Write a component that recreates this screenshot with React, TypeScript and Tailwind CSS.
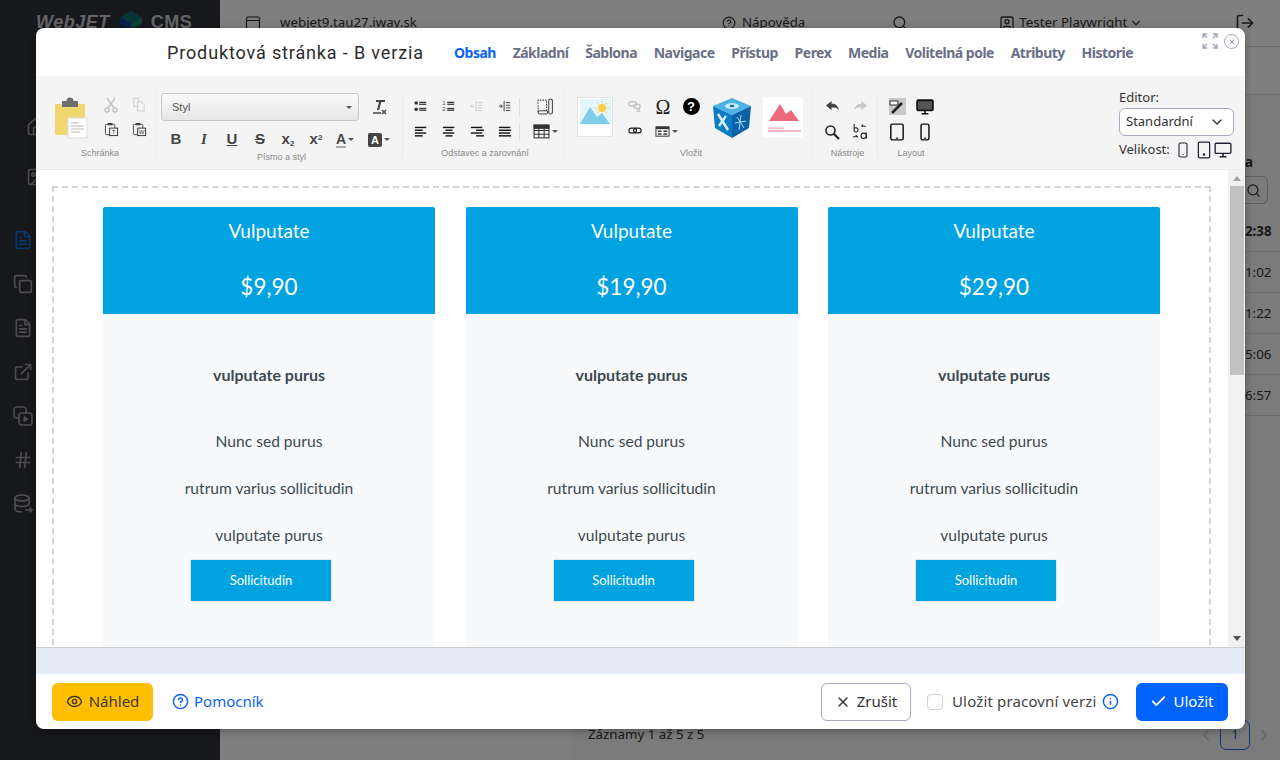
import { Check, ChevronDown, ChevronLeft, ChevronRight, CircleHelp, Copy, ExternalLink, Eye, FileText, Hash, Home, Image, Info, LogOut, Search, SquareUser, X } from "lucide-react";
import type { ReactNode } from "react";

const tabs = ["Obsah", "Základní", "Šablona", "Navigace", "Přístup", "Perex", "Media", "Volitelná pole", "Atributy", "Historie"];
const plans = ["$9,90", "$19,90", "$29,90"];
const times = ["1:02", "1:22", "5:06", "6:57"];

const Ico = ({ children, size = 16, className = "" }: { children: ReactNode; size?: number; className?: string }) => (
    <svg width={size} height={size} viewBox="0 0 16 16" className={className} fill="none">{children}</svg>
);

const Caret = () => <span className="ml-[2px] w-0 h-0 border-x-[3px] border-x-transparent border-t-[3px] border-t-[#555]" />;

const Cell = ({ children, w = "w-[28px]" }: { children: ReactNode; w?: string }) => (
    <div className={`${w} h-[25px] flex items-center justify-center`}>{children}</div>
);

const Lines = ({ kind }: { kind: "left" | "center" | "right" | "full" }) => {
    const short = { left: [1, 9], center: [4, 8], right: [7, 9], full: [1, 14] }[kind];
    return (
        <Ico size={14}>
            <g fill="#111">
                <rect x="1" y="2" width="13" height="1.6" />
                <rect x={short[0]} y="5.2" width={short[1]} height="1.6" />
                <rect x="1" y="8.4" width="13" height="1.6" />
                <rect x={short[0]} y="11.6" width={short[1]} height="1.6" />
            </g>
        </Ico>
    );
};

const PasteSmall = ({ letter }: { letter: string }) => (
    <Ico size={15}>
        <rect x="1.5" y="2.5" width="10" height="11" rx="1" stroke="#444" />
        <rect x="4" y="1" width="5" height="2.5" fill="#444" />
        <rect x="6" y="6.5" width="8.5" height="8" fill="#f4f4f4" stroke="#333" />
        <text x="10.2" y="13" fontSize="6.5" fontFamily="Liberation Sans" textAnchor="middle" fill="#333">{letter}</text>
    </Ico>
);

const FontBtn = ({ children, className = "" }: { children: ReactNode; className?: string }) => (
    <div className={`w-[28px] h-[25px] flex items-center justify-center text-[15px] text-[#444] ${className}`}>{children}</div>
);

const GroupLabel = ({ children }: { children: ReactNode }) => (
    <div className="text-[9px] leading-[10px] text-[#8a8a8a] text-center font-['Liberation_Sans',sans-serif]">{children}</div>
);

const PasteBig = () => (
    <svg width="40" height="42" viewBox="0 0 40 42">
        <rect x="1" y="7" width="30" height="31" rx="1" fill="#f0d76f" />
        <rect x="8" y="4" width="16" height="6" rx="1" fill="#6d6d6d" />
        <circle cx="16" cy="4" r="3.5" fill="#6d6d6d" />
        <rect x="14" y="21" width="19" height="20" fill="#fff" stroke="#ddd" />
        <path d="M17 26h8M17 29h13M17 32h13M17 35h9" stroke="#bbb" strokeWidth="1" />
    </svg>
);

const PhotoIcon = () => (
    <svg width="36" height="40" viewBox="0 0 36 40">
        <rect x="0.5" y="0.5" width="35" height="39" fill="#fff" stroke="#e4e4e4" />
        <rect x="3" y="2" width="31" height="26" fill="#e4f5fb" />
        <path d="M3 27 L13 10 L20 20 L25 16 L33 27 Z" fill="#7fcdea" />
        <circle cx="25" cy="11" r="4" fill="#f7cf45" />
        <path d="M25 4v2M25 16v2M18 11h2M30 11h2M20 6l1.5 1.5M30 6l-1.5 1.5M20 16l1.5-1.5M30 16l-1.5-1.5" stroke="#f7cf45" strokeWidth="1" />
    </svg>
);

const CubeIcon = () => (
    <svg width="40" height="42" viewBox="0 0 40 42">
        <path d="M20 1 L39 9 L20 18 L1 9 Z" fill="#4cb3e6" />
        <path d="M1 9 L20 18 L20 41 L3 31 Z" fill="#0c7cc6" />
        <path d="M39 9 L20 18 L20 41 L37 31 Z" fill="#0a62a8" />
        <ellipse cx="20" cy="9" rx="7" ry="3" fill="#cfeafa" />
        <ellipse cx="20" cy="9" rx="2.5" ry="1.2" fill="#0c7cc6" />
        <path d="M6 17 L16 33 M14 19 L7 29" stroke="#d8f0fb" strokeWidth="2.4" />
        <path d="M29 18 L27 33 M23 26 L34 24 M25 20 L32 31" stroke="#a8dcf5" strokeWidth="1" />
    </svg>
);

const RedImage = () => (
    <svg width="40" height="40" viewBox="0 0 40 40">
        <rect width="40" height="40" fill="#fff" />
        <path d="M6 24 L17 7 L23 17 L28 13 L36 24 Z" fill="#eb6a7c" />
        <rect x="5" y="33" width="33" height="2" fill="#f8b8c2" />
        <rect x="5" y="30.5" width="16" height="1.5" fill="#f8b8c2" />
    </svg>
);

const Tablet = () => (
    <Ico size={18}><rect x="2.5" y="1" width="11" height="14" rx="1.5" stroke="#111" strokeWidth="1.3" /><rect x="7" y="13" width="2" height="1" fill="#111" /></Ico>
);
const Phone = () => (
    <Ico size={18}><rect x="4.5" y="1" width="7" height="14" rx="1.5" stroke="#111" strokeWidth="1.3" /><rect x="7" y="13" width="2" height="1" fill="#111" /></Ico>
);
const Monitor = ({ color = "#111", inner = "none", stroke = 1.2 }: { color?: string; inner?: string; stroke?: number }) => (
    <Ico size={18}><rect x="1" y="2" width="14" height="9" rx="1" stroke={color} strokeWidth={stroke} fill={inner} /><path d="M5 14h6M8 11v3" stroke={color} strokeWidth="1.4" /></Ico>
);

const Toolbar = () => (
    <div className="h-[93px] bg-[#f4f4f4] flex items-start pt-[16px] relative">
        <div className="w-[120px] h-[67px] border-r border-[#ececec] flex flex-col">
            <div className="flex pl-[18px] pt-[5px]">
                <div className="w-[43px]"><PasteBig /></div>
                <div className="grid grid-cols-2 w-[56px] -mt-[5px]">
                    <Cell><Ico><g stroke="#c4c4c4" strokeWidth="1.5"><circle cx="4" cy="13" r="2" /><circle cx="12" cy="13" r="2" /><path d="M5 11 L12 1M11 11 L4 1" /></g></Ico></Cell>
                    <Cell><Ico size={15}><g stroke="#cfcfcf" strokeWidth="1.1"><path d="M2 1h5v9H2z" /><path d="M6 5h4l3 3v7H6z" fill="#f4f4f4" /></g></Ico></Cell>
                    <Cell><PasteSmall letter="T" /></Cell>
                    <Cell><PasteSmall letter="W" /></Cell>
                </div>
            </div>
            <div className="mt-auto pl-[9px] pb-[1px]"><GroupLabel>Schránka</GroupLabel></div>
        </div>

        <div className="w-[247px] h-[67px] border-r border-[#ececec] flex flex-col pl-[5px]">
            <div className="flex items-center h-[28px] mt-[1px]">
                <div className="w-[198px] h-[28px] border border-[#c9c9c9] rounded-[3px] bg-gradient-to-b from-[#fafafa] to-[#e6e6e6] flex items-center pl-[10px] pr-[6px] text-[11px] text-[#555] font-['Liberation_Sans',sans-serif]">
                    <span>Styl</span>
                    <span className="ml-auto flex"><Caret /></span>
                </div>
                <div className="ml-[12px]">
                    <Ico size={16}>
                        <path d="M5 2h9M9.500 2 L7 11" stroke="#444" strokeWidth="2.200" />
                        <path d="M2 14h8" stroke="#444" strokeWidth="1.500" />
                        <path d="M11 11l4 4M15 11l-4 4" stroke="#444" strokeWidth="1.300" />
                    </Ico>
                </div>
            </div>
            <div className="flex items-center mt-[6px] ml-[1px] font-['Liberation_Sans',sans-serif]">
                <FontBtn className="font-bold">B</FontBtn>
                <FontBtn className="italic font-bold font-['Liberation_Serif',serif]">I</FontBtn>
                <FontBtn className="underline font-bold text-[14px]">U</FontBtn>
                <FontBtn className="line-through font-bold">S</FontBtn>
                <FontBtn className="font-bold"><span>x<sub className="text-[8px]">2</sub></span></FontBtn>
                <FontBtn className="font-bold"><span>x<sup className="text-[8px]">2</sup></span></FontBtn>
                <div className="w-[30px] h-[25px] flex items-center justify-center text-[14px] font-bold text-[#444]">
                    <span className="border-b-2 border-[#aaa] leading-[14px]">A</span><Caret />
                </div>
                <div className="w-[38px] h-[25px] flex items-center justify-center">
                    <span className="w-[14px] h-[14px] rounded-[2px] bg-[#444] text-white text-[11px] leading-[14px] font-bold text-center">A</span><Caret />
                </div>
            </div>
            <div className="mt-auto pb-[1px]"><GroupLabel>Písmo a styl</GroupLabel></div>
        </div>

        <div className="w-[161px] h-[67px] border-r border-[#ececec] flex flex-col pl-[4px]">
            <div className="grid grid-cols-[28px_28px_28px_28px_8px_36px] pt-[2px] items-center">
                <Cell><Ico size={14}><g fill="#333"><circle cx="2.5" cy="3.5" r="2" /><circle cx="2.5" cy="10.5" r="2" /><rect x="6" y="2" width="8" height="1.8" /><rect x="6" y="9" width="8" height="1.8" /><rect x="6" y="4.6" width="8" height="1" /><rect x="6" y="11.6" width="8" height="1" /></g></Ico></Cell>
                <Cell><Ico size={14}><g fill="#333"><rect x="6" y="2" width="8" height="1.8" /><rect x="6" y="4.6" width="8" height="1" /><rect x="6" y="9" width="8" height="1.8" /><rect x="6" y="11.6" width="8" height="1" /><text x="0.5" y="6" fontSize="6" fontFamily="Liberation Sans">1</text><text x="0.5" y="13" fontSize="6" fontFamily="Liberation Sans">2</text></g></Ico></Cell>
                <Cell><Ico size={14}><g stroke="#c8c8c8" strokeWidth="1"><path d="M7 1v12M9 3h5M9 6h5M9 9h5M9 12h5M1 7h4M3 5 L1 7 L3 9" /></g></Ico></Cell>
                <Cell><Ico size={14}><g stroke="#333" strokeWidth="1"><path d="M7 1v12M9 3h5M9 6h5M9 9h5M9 12h5M1 7h4M3 5 L5 7 L3 9" /></g></Ico></Cell>
                <div className="w-px h-[18px] bg-[#ddd]" />
                <Cell w="w-[36px]"><Ico size={17}><g stroke="#444" strokeWidth="1"><path d="M1 13V2h8v10" strokeDasharray="1.5 1" /><rect x="1" y="12" width="9" height="3" rx="1.5" /><rect x="11" y="1" width="3.5" height="14" rx="1.7" /></g></Ico></Cell>
                <Cell><Lines kind="left" /></Cell>
                <Cell><Lines kind="center" /></Cell>
                <Cell><Lines kind="right" /></Cell>
                <Cell><Lines kind="full" /></Cell>
                <div className="w-px h-[18px] bg-[#ddd]" />
                <Cell w="w-[36px]">
                    <Ico size={17}><g stroke="#333" strokeWidth="1"><rect x="1" y="2" width="14" height="12" /><path d="M1 7h14M1 10.500h14M5.500 5v9M10.500 5v9" /><rect x="1" y="2" width="14" height="3" fill="#333" /></g></Ico>
                    <Caret />
                </Cell>
            </div>
            <div className="mt-auto pb-[1px]"><GroupLabel>Odstavec a zarovnání</GroupLabel></div>
        </div>

        <div className="w-[249px] h-[67px] border-r border-[#ececec] flex flex-col">
            <div className="flex pl-[13px] pt-[5px]">
                <div className="w-[44px]"><PhotoIcon /></div>
                <div className="grid grid-cols-[28px_28px_28px] -mt-[3px] h-[50px]">
                    <Cell><Ico size={15}><g stroke="#c4c4c4" strokeWidth="1.5"><rect x="1" y="3" width="8" height="4.500" rx="2.200" /><rect x="6" y="5.500" width="7" height="4.500" rx="2.200" /><path d="M9 10l4 4M13 10l-4 4" /></g></Ico></Cell>
                    <Cell><span className="text-[20px] leading-none text-[#222] font-['Liberation_Serif',serif]">Ω</span></Cell>
                    <Cell><span className="w-[17px] h-[17px] rounded-full bg-black text-white text-[13px] leading-[17px] font-bold text-center font-['Liberation_Sans',sans-serif]">?</span></Cell>
                    <Cell><Ico size={15}><g stroke="#222" strokeWidth="1.300"><rect x="1" y="4.500" width="8" height="5" rx="2.500" /><rect x="6" y="4.500" width="8" height="5" rx="2.500" /></g></Ico></Cell>
                    <div className="col-span-2 flex items-center pl-[6px]">
                        <Ico size={15}><g fill="#333"><rect x="1" y="3" width="14" height="10" fill="none" stroke="#333" /><rect x="1" y="3" width="14" height="2.500" /><rect x="3" y="7" width="4" height="1.500" /><rect x="9" y="7" width="4" height="1.500" /><rect x="3" y="10" width="4" height="1.500" /><rect x="9" y="10" width="4" height="1.500" /></g></Ico>
                        <Caret />
                    </div>
                </div>
                <div className="ml-[7px] w-[51px]"><CubeIcon /></div>
                <RedImage />
            </div>
            <div className="mt-auto pb-[1px] pl-[6px]"><GroupLabel>Vložit</GroupLabel></div>
        </div>

        <div className="w-[65px] h-[67px] border-r border-[#ececec] flex flex-col pl-[5px]">
            <div className="grid grid-cols-[28px_28px] pt-[2px]">
                <Cell><Ico size={15}><path d="M1 7 L7 2 V5 C11 5 14 7 15 12 C13 9 11 9 7 9 V12 Z" fill="#444" /></Ico></Cell>
                <Cell><Ico size={15}><path d="M15 7 L9 2 V5 C5 5 2 7 1 12 C3 9 5 9 9 9 V12 Z" fill="#c9c9c9" /></Ico></Cell>
                <Cell><Ico size={16}><g stroke="#222" strokeWidth="1.600"><circle cx="6.500" cy="6.500" r="4.500" /><path d="M10 10 L15 15" strokeWidth="2.200" /></g></Ico></Cell>
                <Cell><Ico size={17}><g stroke="#222" strokeWidth="1"><path d="M2 1v7M2 5.500a2 2 0 1 1 0 2" /><path d="M9 3h4M9 3l1.500-1.500M1 13h4l-1.500-1.500" /><circle cx="11" cy="12" r="2.500" /><path d="M13.500 9v5.500" /></g></Ico></Cell>
            </div>
            <div className="mt-auto pb-[1px]"><GroupLabel>Nástroje</GroupLabel></div>
        </div>

        <div className="w-[69px] h-[67px] flex flex-col pl-[5px]">
            <div className="grid grid-cols-[28px_28px] pt-[2px]">
                <Cell><span className="w-[17px] h-[17px] bg-[#c9c9c9] flex items-center justify-center"><Ico size={16}><rect x="1" y="2" width="8" height="4" fill="#fff" stroke="#333" /><path d="M3 14 L13 4" stroke="#222" strokeWidth="2.500" /></Ico></span></Cell>
                <Cell><Monitor inner="#555" stroke={1.600} /></Cell>
                <Cell><Tablet /></Cell>
                <Cell><Phone /></Cell>
            </div>
            <div className="mt-auto pb-[1px] pr-[8px]"><GroupLabel>Layout</GroupLabel></div>
        </div>

        <div className="ml-auto mr-[11px] w-[115px] -mt-[3px] text-[13px] text-[#333] font-['Noto_Sans',sans-serif]">
            <div className="leading-[16px] h-[16px]">Editor:</div>
            <div className="mt-[3px] h-[28px] rounded-[6px] border border-[#a6abc4] bg-white flex items-center pl-[6px] pr-[8px] text-[#333]">
                <span>Standardní</span>
                <ChevronDown size={16} className="ml-auto" />
            </div>
            <div className="mt-[6px] flex items-center h-[16px]">
                <span>Velikost:</span>
                <span className="ml-[5px] flex items-center gap-[1px]">
                    <Ico size={16}><rect x="4" y="1" width="8" height="14" rx="1.500" stroke="#223" strokeWidth="1.100" /><rect x="7.500" y="12" width="1" height="1" fill="#223" /></Ico>
                    <Ico size={18} className="ml-[3px]"><rect x="3" y="1" width="10" height="14" rx="1" stroke="#223" strokeWidth="1.100" /><rect x="7" y="11" width="2" height="2" fill="#223" /></Ico>
                    <Monitor color="#223" />
                </span>
            </div>
        </div>
    </div>
);

const PlanCard = ({ price }: { price: string }) => (
    <div className="font-['Lato',sans-serif]">
        <div className="h-[107px] bg-[#00a3e0] rounded-t-[2px] text-white text-center">
            <div className="pt-[10px] text-[19px] leading-[27px]">Vulputate</div>
            <div className="mt-[25px] text-[22.500px] leading-[36px]">{price}</div>
        </div>
        <div className="h-[380px] bg-[#f7f9fb] text-[#3c4a50] text-[15.600px]">
            <div className="pt-[37px] text-center text-[16px] font-bold h-[84px] leading-[47px]">vulputate purus</div>
            <div className="pt-[20px]">
                <p className="h-[47px] leading-[47px] text-center">Nunc sed purus</p>
                <p className="h-[47px] leading-[47px] text-center">rutrum varius sollicitudin</p>
                <p className="h-[47px] leading-[47px] text-center">vulputate purus</p>
            </div>
            <div className="mt-[1px] ml-[88px] w-[140px] h-[41px] bg-[#00a3e0] text-white text-[13px] flex items-center justify-center shadow-[0_0_2px_rgba(0,0,0,0.25)]">Sollicitudin</div>
        </div>
    </div>
);

const Modal = () => (
    <div className="absolute left-[36px] top-[28px] w-[1209px] h-[701px] bg-white rounded-[8px] overflow-hidden shadow-[0_2px_8px_rgba(0,0,0,0.3)] flex flex-col">
        <div className="h-[48px] flex items-center relative shrink-0">
            <div className="ml-[131px] w-[287px] text-[18px] tracking-[0.86px] text-[#2b2b2b] font-['Roboto',sans-serif]">Produktová stránka - B verzia</div>
            <div className="flex gap-[16.700px] text-[14px] font-bold text-[#6a6f85] font-['Noto_Sans',sans-serif] tracking-[-0.5px]">
                {tabs.map((t, i) => (
                    <span key={t} className={i === 0 ? "text-[#0a63f6]" : ""}>{t}</span>
                ))}
            </div>
            <svg width="16" height="16" viewBox="0 0 16 16" fill="none" stroke="#9fa5ba" strokeWidth="1.400" className="absolute right-[27px] top-[5px]">
                <path d="M1 5V1h4M1 1l4 4M15 5V1h-4M15 1l-4 4M1 11v4h4M1 15l4-4M15 11v4h-4M15 15l-4-4" />
            </svg>
            <div className="absolute right-[6px] top-[6px] w-[15px] h-[15px] rounded-full border-[1.500px] border-[#9fa5ba] flex items-center justify-center">
                <X size={8} strokeWidth={3} color="#8f95aa" />
            </div>
        </div>

        <Toolbar />

        <div className="h-[479px] shrink-0 border-t border-[#e6ecf4] border-b border-b-[#cfcfcf] flex overflow-hidden">
            <div className="flex-1 bg-white pl-[16px] pr-[17px] pt-[16px] overflow-hidden">
                <div className="h-[600px] border-2 border-dashed border-[#d5d5d5] px-[49px] pt-[19px] grid grid-cols-3 gap-x-[30.500px] content-start">
                    {plans.map(p => <PlanCard key={p} price={p} />)}
                </div>
            </div>
            <div className="w-[17px] bg-[#f1f1f1] flex flex-col items-center pt-[6px] relative">
                <span className="w-0 h-0 border-x-[4px] border-x-transparent border-b-[5px] border-b-[#a3a3a3]" />
                <div className="mt-[5px] w-[14px] h-[189px] bg-[#c1c1c1]" />
                <span className="absolute bottom-[6px] w-0 h-0 border-x-[4px] border-x-transparent border-t-[5px] border-t-[#505050]" />
            </div>
        </div>

        <div className="h-[26px] bg-[#e6ecf7] shrink-0" />

        <div className="flex-1 flex items-center pl-[16px] pr-[17px] text-[15px] font-['Noto_Sans',sans-serif]">
            <div className="w-[101px] h-[38px] rounded-[6px] bg-[#ffbe00] flex items-center justify-center gap-[6px] text-[#40392a]">
                <Eye size={17} />
                <span>Náhled</span>
            </div>
            <div className="ml-[19px] flex items-center gap-[5px] text-[#0a63f6]">
                <CircleHelp size={17} />
                <span>Pomocník</span>
            </div>
            <div className="ml-auto w-[90px] h-[38px] rounded-[6px] border border-[#a6abc4] flex items-center justify-center gap-[6px] text-[#333]">
                <X size={16} />
                <span>Zrušit</span>
            </div>
            <span className="ml-[16px] w-[16px] h-[16px] rounded-[4px] border border-[#d0d0d8] bg-white" />
            <span className="ml-[9px] w-[144px] whitespace-nowrap text-[#444] tracking-[0.15px]">Uložit pracovní verzi</span>
            <Info size={17} className="ml-[6px] text-[#0a63f6]" />
            <div className="ml-[17px] w-[92px] h-[38px] rounded-[6px] bg-[#0063fb] text-white flex items-center justify-center gap-[6px]">
                <Check size={17} strokeWidth={2.500} />
                <span>Uložit</span>
            </div>
        </div>
    </div>
);

const Sidebar = () => (
    <div className="w-[220px] h-[760px] bg-[#2e3039] text-[#a8a9ae] shrink-0 overflow-hidden">
        <div className="flex items-center h-[46px] pl-[36px] pb-[2px]">
            <span className="text-[18px] italic font-bold tracking-[0.5px] font-['Liberation_Sans',sans-serif] text-[#c8c8cc]">WebJET</span>
            <svg width="24" height="24" viewBox="0 0 26 24" className="ml-[9px]">
                <path d="M13 0 L25 7 L13 13 L1 7 Z" fill="#0f6b6b" />
                <path d="M1 7 L13 13 L13 20 L1 14 Z" fill="#0b3f96" />
                <path d="M25 7 L13 13 L13 20 L25 14 Z" fill="#14806a" />
                <path d="M1 14 L13 20 L13 24 L4 24 Z" fill="#0a3484" />
            </svg>
            <span className="ml-[8px] text-[18px] font-bold tracking-[0.5px] font-['Liberation_Sans',sans-serif] text-[#c8c8cc]">CMS</span>
        </div>
        <div className="flex flex-col items-start pl-[13px] text-[#9a9ba0]">
            <div className="pt-[71px] ml-[13px]"><Home size={20} /></div>
            <div className="mt-[30px] ml-[13px]"><Image size={20} /></div>
            <div className="mt-[43px] flex flex-col gap-[24px]">
                <FileText size={20} className="text-[#0f74d8]" />
                <Copy size={20} />
                <FileText size={20} />
                <ExternalLink size={20} />
                <svg width="20" height="20" viewBox="0 0 20 20" fill="none" stroke="currentColor" strokeWidth="1.700">
                    <rect x="1" y="1" width="12" height="11" rx="2.500" />
                    <rect x="6" y="7" width="13" height="12" rx="2.500" fill="#2e3039" />
                    <path d="M11 10.500v5l4-2.500z" fill="currentColor" strokeWidth="1" />
                </svg>
                <Hash size={20} />
                <svg width="20" height="20" viewBox="0 0 20 20" fill="none" stroke="currentColor" strokeWidth="1.700">
                    <ellipse cx="9" cy="4" rx="7" ry="3" />
                    <path d="M2 4v11c0 1.700 3 3 7 3M16 4v6M2 9.500c0 1.700 3 3 7 3s7-1.300 7-3" />
                    <path d="M12 16h7M16.500 13.500L19 16l-2.500 2.500" />
                </svg>
            </div>
        </div>
    </div>
);

const Main = () => (
    <div className="flex-1 h-[760px] flex flex-col text-[#333] font-['Noto_Sans',sans-serif] text-[13.300px] overflow-hidden">
        <div className="h-[47px] border-b border-[#ddd] flex items-center relative pl-[25px] shrink-0 whitespace-nowrap">
            <Ico size={16}><rect x="1.500" y="2" width="13" height="12" rx="1.500" stroke="#223" strokeWidth="1.200" /><path d="M1.500 5.500h13" stroke="#223" /></Ico>
            <span className="ml-[19px]">webjet9.tau27.iway.sk</span>
            <CircleHelp size={14} className="ml-[305px]" />
            <span className="ml-[6px]">Nápověda</span>
            <Search size={16} className="ml-[87px]" />
            <SquareUser size={16} className="ml-[91px]" />
            <span className="ml-[4px]">Tester Playwright</span>
            <ChevronDown size={14} className="ml-[2px]" />
            <LogOut size={20} className="ml-[92px]" />
        </div>
        <div className="h-[48px] border-b border-[#ddd] shrink-0" />
        <div className="flex-1 flex flex-col items-end">
            <div className="w-[35px] bg-[#f6f6f6] h-full">
                <div className="pt-[56px] font-bold h-[78px] leading-[22px]">a</div>
                <div className="h-[28px] w-[23px] mt-[3px] border border-[#bbb] border-l-0 rounded-r-[6px] flex items-center"><Search size={15} className="ml-[1px]" /></div>
                <div className="h-[48px] border-b border-[#ddd] flex items-end pb-[9px] font-bold">2:38</div>
                {times.map(t => (
                    <div key={t} className="h-[41px] border-b border-[#ddd] leading-[41px]">{t}</div>
                ))}
            </div>
        </div>
        <div className="absolute left-[572px] right-0 bottom-0 h-[50px] bg-[#f6f6f6] flex items-center pl-[16px]">
            <span>Záznamy 1 až 5 z 5</span>
            <ChevronLeft size={18} className="ml-auto text-[#ccc]" />
            <span className="ml-[5px] w-[30px] h-[30px] rounded-[6px] border border-[#2f6fe0] text-[#1f55c8] flex items-center justify-center">1</span>
            <ChevronRight size={18} className="ml-[5px] mr-[7px] text-[#ccc]" />
        </div>
    </div>
);

const App = () => {
    return (
        <div className="relative w-[1280px] h-[760px] overflow-hidden bg-white flex">
            <Sidebar />
            <Main />
            <div className="absolute inset-0 bg-black/50" />
            <Modal />
        </div>
    );
};

export default App;
